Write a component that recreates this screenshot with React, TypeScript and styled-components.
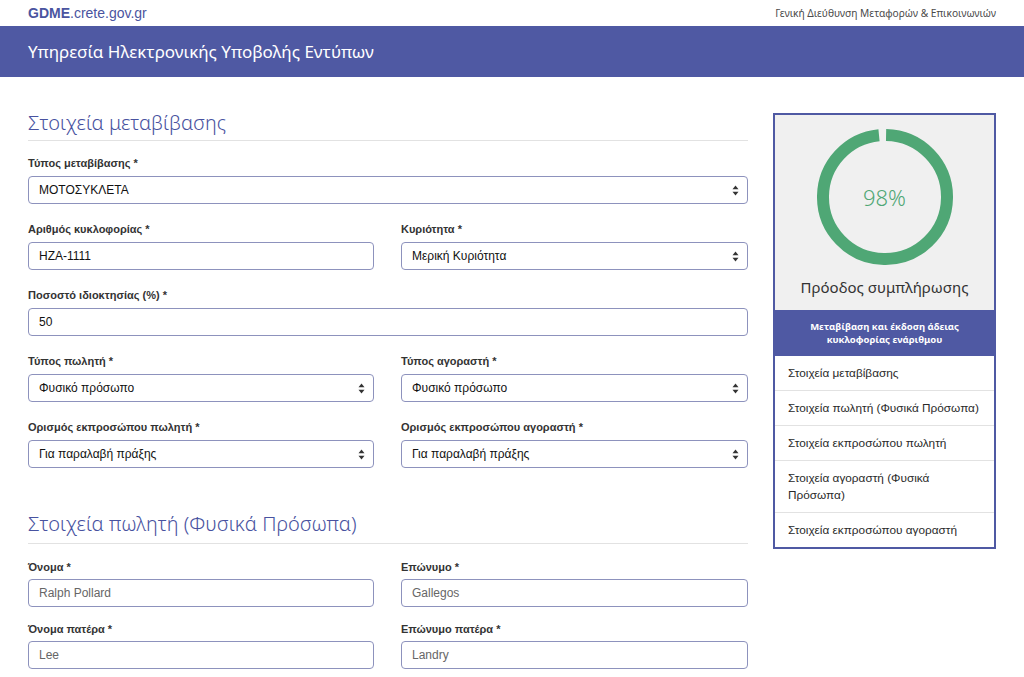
import React from "react";
import styled, { createGlobalStyle } from "styled-components";

const Global = createGlobalStyle`
  html, body { margin: 0; padding: 0; background: #fff; }
  body { font-family: "Liberation Sans", Arial, sans-serif; }
  * { box-sizing: border-box; }
`;

const BLUE = "#4f59a3";
const GREEN = "#4fa775";

const TopBar = styled.div`
  height: 26px;
  padding: 0 28px;
  display: flex;
  align-items: center;
  justify-content: space-between;
`;

const Brand = styled.div`
  font-family: "Liberation Sans", Arial, sans-serif;
  font-size: 14px;
  color: #4a54a0;
  b { font-weight: 700; }
`;

const Dept = styled.div`
  font-family: "Noto Sans", sans-serif;
  font-size: 10.2px;
  color: #4a4a4a;
`;

const Header = styled.div`
  height: 51px;
  background: ${BLUE};
  padding: 0 28px;
  display: flex;
  align-items: center;
`;

const Title = styled.h1`
  margin: 0;
  font-family: "Noto Sans", sans-serif;
  font-weight: 400;
  font-size: 17px;
  color: #fff;
`;

const Main = styled.div`
  display: flex;
  gap: 25px;
  padding: 0 28px;
  align-items: flex-start;
`;

const FormCol = styled.div`
  width: 720px;
`;

const SectionHead = styled.h2<{ $top: number; $pad: number }>`
  margin: ${(p) => p.$top}px 0 0;
  padding-bottom: ${(p) => p.$pad}px;
  border-bottom: 1px solid #e2e2e2;
  font-family: "Noto Sans", sans-serif;
  font-weight: 300;
  font-size: 20px;
  line-height: 26px;
  color: #4852a0;
`;

const Fields = styled.div<{ $gap: number; $top: number }>`
  margin-top: ${(p) => p.$top}px;
  display: grid;
  grid-template-columns: 346px 347px;
  column-gap: 27px;
  row-gap: ${(p) => p.$gap}px;
`;

const Field = styled.div<{ $full?: boolean; $gap: number }>`
  grid-column: ${(p) => (p.$full ? "1 / -1" : "auto")};
  display: flex;
  flex-direction: column;
  gap: ${(p) => p.$gap}px;
`;

const Label = styled.label`
  font-size: 11px;
  line-height: 14px;
  font-weight: 700;
  color: #333;
`;

const Box = styled.div<{ $muted?: boolean }>`
  height: 28px;
  border: 1px solid #8d92bd;
  border-radius: 4px;
  padding: 0 8px 0 10px;
  display: flex;
  align-items: center;
  justify-content: space-between;
  font-size: 12px;
  color: ${(p) => (p.$muted ? "#666" : "#111")};
  background: #fff;
`;

const Arrows = () => (
  <svg width="7" height="11" viewBox="0 0 7 11">
    <path d="M3.5 0.5 L6.5 4.2 L0.5 4.2 Z" fill="#333" />
    <path d="M3.5 10.5 L6.5 6.8 L0.5 6.8 Z" fill="#333" />
  </svg>
);

const Side = styled.aside`
  margin-top: 36px;
  width: 223px;
  border: 2px solid ${BLUE};
  background: #fff;
`;

const Progress = styled.div`
  background: #f0f0f0;
  padding: 14px 0 13px;
  display: flex;
  flex-direction: column;
  align-items: center;
`;

const Ring = styled.div`
  width: 136px;
  height: 136px;
  display: grid;
  place-items: center;
  svg, span { grid-area: 1 / 1; }
`;

const Percent = styled.span`
  font-family: "Noto Sans", sans-serif;
  font-weight: 300;
  font-size: 22px;
  color: ${GREEN};
`;

const ProgressLabel = styled.div`
  margin-top: 12px;
  font-family: "Noto Sans", sans-serif;
  font-size: 15px;
  line-height: 20px;
  color: #333;
`;

const Band = styled.div`
  background: ${BLUE};
  height: 46px;
  display: flex;
  align-items: center;
  justify-content: center;
  text-align: center;
  font-family: "Noto Sans", sans-serif;
  font-size: 9.5px;
  font-weight: 700;
  line-height: 13px;
  color: #fff;
  padding: 0 12px;
`;

const NavItem = styled.div`
  padding: 9px 14px 8px 13px;
  font-size: 11.8px;
  line-height: 17px;
  color: #2a2a2a;
  border-bottom: 1px solid #e2e2e2;
  &:last-child { border-bottom: none; }
`;

type F = { label: string; value: string; select?: boolean; full?: boolean };

const section1: F[] = [
  { label: "Τύπος μεταβίβασης *", value: "ΜΟΤΟΣΥΚΛΕΤΑ", select: true, full: true },
  { label: "Αριθμός κυκλοφορίας *", value: "HZA-1111" },
  { label: "Κυριότητα *", value: "Μερική Κυριότητα", select: true },
  { label: "Ποσοστό ιδιοκτησίας (%) *", value: "50", full: true },
  { label: "Τύπος πωλητή *", value: "Φυσικό πρόσωπο", select: true },
  { label: "Τύπος αγοραστή *", value: "Φυσικό πρόσωπο", select: true },
  { label: "Ορισμός εκπροσώπου πωλητή *", value: "Για παραλαβή πράξης", select: true },
  { label: "Ορισμός εκπροσώπου αγοραστή *", value: "Για παραλαβή πράξης", select: true },
];

const section2: F[] = [
  { label: "Όνομα *", value: "Ralph Pollard" },
  { label: "Επώνυμο *", value: "Gallegos" },
  { label: "Όνομα πατέρα *", value: "Lee" },
  { label: "Επώνυμο πατέρα *", value: "Landry" },
];

const nav = [
  "Στοιχεία μεταβίβασης",
  "Στοιχεία πωλητή (Φυσικά Πρόσωπα)",
  "Στοιχεία εκπροσώπου πωλητή",
  "Στοιχεία αγοραστή (Φυσικά Πρόσωπα)",
  "Στοιχεία εκπροσώπου αγοραστή",
];

const renderFields = (fields: F[], gap: number, muted?: boolean) =>
  fields.map((f) => (
    <Field key={f.label} $full={f.full} $gap={gap}>
      <Label>{f.label}</Label>
      <Box $muted={muted}>
        <span>{f.value}</span>
        {f.select && <Arrows />}
      </Box>
    </Field>
  ));

const Donut = ({ pct }: { pct: number }) => {
  const r = 62;
  const c = 2 * Math.PI * r;
  return (
    <svg width="136" height="136" viewBox="0 0 136 136">
      <circle
        cx="68"
        cy="68"
        r={r}
        fill="none"
        stroke={GREEN}
        strokeWidth="12"
        strokeDasharray={`${(c * pct) / 100} ${c}`}
        transform="rotate(-89 68 68)"
      />
    </svg>
  );
};

export default function App() {
  return (
    <>
      <Global />
      <TopBar>
        <Brand>
          <b>GDME</b>.crete.gov.gr
        </Brand>
        <Dept>Γενική Διεύθυνση Μεταφορών &amp; Επικοινωνιών</Dept>
      </TopBar>
      <Header>
        <Title>Υπηρεσία Ηλεκτρονικής Υποβολής Εντύπων</Title>
      </Header>
      <Main>
        <FormCol>
          <SectionHead $top={33} $pad={4}>Στοιχεία μεταβίβασης</SectionHead>
          <Fields $gap={18} $top={15}>{renderFields(section1, 6)}</Fields>
          <SectionHead $top={43} $pad={6}>Στοιχεία πωλητή (Φυσικά Πρόσωπα)</SectionHead>
          <Fields $gap={15} $top={16}>{renderFields(section2, 5, true)}</Fields>
        </FormCol>
        <Side>
          <Progress>
            <Ring>
              <Donut pct={98} />
              <Percent>98%</Percent>
            </Ring>
            <ProgressLabel>Πρόοδος συμπλήρωσης</ProgressLabel>
          </Progress>
          <Band>
            Μεταβίβαση και έκδοση άδειας
            <br />
            κυκλοφορίας ενάριθμου
          </Band>
          {nav.map((n) => (
            <NavItem key={n}>{n}</NavItem>
          ))}
        </Side>
      </Main>
    </>
  );
}
